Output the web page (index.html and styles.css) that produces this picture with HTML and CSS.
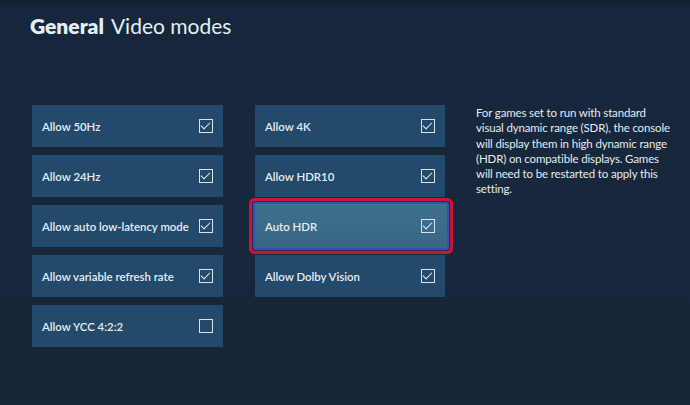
FILE: index.html
```html
<!DOCTYPE html>
<html>
<head>
<meta charset="utf-8">
<link rel="stylesheet" href="styles.css">
</head>
<body>
<div class="screen">
  <header class="title">
    <span class="title-section">General</span>
    <span class="title-page">Video modes</span>
  </header>
  <main class="content">
    <div class="col col-left">
      <div class="tile"><span class="label">Allow 50Hz</span><span class="check on"></span></div>
      <div class="tile"><span class="label">Allow 24Hz</span><span class="check on"></span></div>
      <div class="tile"><span class="label">Allow auto low-latency mode</span><span class="check on"></span></div>
      <div class="tile"><span class="label">Allow variable refresh rate</span><span class="check on"></span></div>
      <div class="tile"><span class="label">Allow YCC 4:2:2</span><span class="check"></span></div>
    </div>
    <div class="col col-right">
      <div class="tile"><span class="label">Allow 4K</span><span class="check on"></span></div>
      <div class="tile"><span class="label">Allow HDR10</span><span class="check on"></span></div>
      <div class="tile tile-focus"><span class="label">Auto HDR</span><span class="check on"></span></div>
      <div class="tile"><span class="label">Allow Dolby Vision</span><span class="check on"></span></div>
    </div>
    <p class="desc">For games set to run with standard visual dynamic range (SDR), the console will display them in high dynamic range (HDR) on compatible displays. Games will need to be restarted to apply this setting.</p>
  </main>
</div>
</body>
</html>
```
FILE: styles.css
```css
html, body {
  margin: 0;
  padding: 0;
}
body {
  width: 690px;
  height: 405px;
  overflow: hidden;
  background: #16263a;
  font-family: "Lato", "Open Sans", sans-serif;
  color: #e6edf2;
}
.screen {
  width: 690px;
  height: 405px;
  background: linear-gradient(180deg, #132033 0px, #17273b 12px, #17283c 60%, #152436 100%);
}
.title {
  padding: 13px 0 0 30px;
  height: 94px;
  box-sizing: border-box;
  font-family: "Lato", "Open Sans", sans-serif;
  font-size: 21px;
  color: #e4eef6;
  display: flex;
  gap: 7px;
  align-items: baseline;
}
.title-section {
  font-weight: 800;
}
.title-page {
  font-weight: 400;
}
.content {
  display: flex;
  align-items: flex-start;
  padding: 11px 0 0 32px;
}
.col {
  display: flex;
  flex-direction: column;
  gap: 8px;
}
.col-left {
  width: 191px;
}
.col-right {
  width: 190px;
  margin-left: 32px;
}
.tile {
  height: 42px;
  box-sizing: border-box;
  background: #234a6b;
  display: flex;
  align-items: center;
  justify-content: space-between;
  padding: 0 10px 0 10px;
  font-size: 11.4px;
  font-weight: 600;
  white-space: nowrap;
}
.check {
  width: 14px;
  height: 14px;
  flex: none;
  box-sizing: border-box;
  border: 1.5px solid #d8e3ec;
  position: relative;
}
.check.on::after {
  content: "";
  position: absolute;
  left: 3px;
  top: 0px;
  width: 4px;
  height: 8px;
  border: solid #e6eef4;
  border-width: 0 1.5px 1.5px 0;
  transform: rotate(45deg);
}
.tile-focus {
  height: 48px;
  margin: -3px -4px -3px -2px;
  background: linear-gradient(180deg, #40708f, #3a6685);
  border: 2px solid #1f5cad;
  border-radius: 2px;
  padding: 0 12px 0 10px;
  box-shadow: 0 0 0 1px #3a2450, 0 0 0 4px #d2103c;
}
.desc {
  margin: 0 0 0 31px;
  width: 200px;
  font-size: 11.5px;
  letter-spacing: -0.15px;
  line-height: 15.3px;
  color: #e3ebf1;
}
```
